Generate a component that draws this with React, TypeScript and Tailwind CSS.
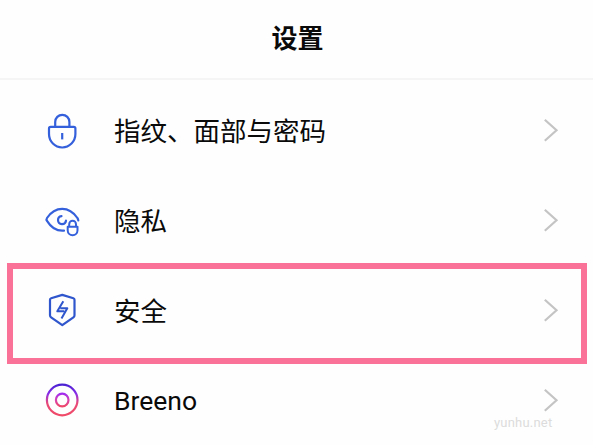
import type { ReactNode } from "react";

function LockIcon() {
  return (
    <svg viewBox="0 0 40 40" className="w-10 h-10" fill="none" stroke="#3560dc" strokeWidth="2.2" strokeLinecap="round">
      <path d="M13.2 16.5v-4.6a7.1 7.1 0 0 1 14.2 0v4.6" />
      <path d="M8.6 16.9h23.2c1 0 1.6.6 1.6 1.6v5.6a13.2 13.4 0 0 1-26.4 0v-5.6c0-1 .6-1.6 1.6-1.6Z" />
      <path d="M20.2 23v6.4" strokeLinecap="butt" />
    </svg>
  );
}

function PrivacyIcon() {
  return (
    <svg viewBox="0 0 40 40" className="w-10 h-10" fill="none" stroke="#3560dc" strokeWidth="2.2" strokeLinecap="round">
      <path d="M36.3 20.5c-.1-1.2-.3-1.7-.9-2.5C31.4 12.2 26.2 8.9 20.2 8.9S8.9 12.2 5 18c-.6.9-.6 1.9 0 2.8 3.9 6.3 9.2 9.900 15.200 9.900h1.800" />
      <path d="M19.5 16.1a4 4 0 1 0 4.5 4.5" />
      <path d="M27.2 26.3v-2.1a3.4 3.400 0 0 1 6.800 0v2.100" strokeWidth="2" />
      <path d="M25.7 26.7h9.8v3.6a4.900 4.900 0 0 1-9.800 0Z" strokeLinejoin="round" strokeWidth="2" />
    </svg>
  );
}

function SecurityIcon() {
  return (
    <svg viewBox="0 0 40 40" className="w-10 h-10" fill="none" stroke="#2f56cc" strokeWidth="2.2" strokeLinejoin="round">
      <path d="M20.3 4.9 31.4 8.3c.7.2 1.1.7 1.1 1.4v15.6c0 .9-.4 1.6-1.1 2.1L20.3 35.2 9.1 27.4c-.7-.5-1.1-1.2-1.1-2.1V9.7c0-.7.4-1.2 1.1-1.4Z" />
      <path d="M21.3 11.3 15.3 21.3h7M18.3 18.2h7L19.5 28.4" strokeWidth="2" />
    </svg>
  );
}

function BreenoIcon() {
  return (
    <svg viewBox="0 0 40 40" className="w-10 h-10" fill="none" strokeWidth="2.2">
      <defs>
        <linearGradient id="outer" x1="0" y1="0" x2="0" y2="1">
          <stop offset="0" stopColor="#4a22d2" />
          <stop offset="0.3" stopColor="#8b2de8" />
          <stop offset="0.6" stopColor="#e84a78" />
          <stop offset="1" stopColor="#f04a68" />
        </linearGradient>
        <linearGradient id="inner" x1="0" y1="0" x2="0" y2="1">
          <stop offset="0" stopColor="#a02cf0" />
          <stop offset="0.5" stopColor="#d843b0" />
          <stop offset="1" stopColor="#ee4668" />
        </linearGradient>
      </defs>
      <circle cx="20.2" cy="20" r="15.3" stroke="url(#outer)" />
      <circle cx="20.2" cy="20" r="6.3" stroke="url(#inner)" />
    </svg>
  );
}

function Row({ icon, label, labelClass = "" }: { icon: ReactNode; label: string; labelClass?: string }) {
  return (
    <li className="flex items-center h-[90px] pl-[42px] pr-[34px]">
      {icon}
      <span className={`ml-8 flex-1 text-[26.5px] leading-10 whitespace-nowrap ${labelClass}`}>{label}</span>
      <svg viewBox="0 0 16 24" className="w-4 h-6" fill="none" stroke="#c4c4c4" strokeWidth="2.2">
        <path d="M1.8 1.8 13.5 12.3 1.8 22.8" />
      </svg>
    </li>
  );
}

export default function App() {
  return (
    <div className="relative w-[593px] h-[445px] overflow-hidden bg-[#fefefe] text-[#0a0a0a] font-['Noto_Sans_CJK_SC',sans-serif]">
      <header className="h-20 pb-1 pl-0.5 flex items-center justify-center border-b-2 border-[#f5f5f5]">
        <h1 className="text-[26px] leading-none font-bold">设置</h1>
      </header>

      <ul className="pt-[5px]">
        <Row icon={<LockIcon />} label="指纹、面部与密码" />
        <Row icon={<PrivacyIcon />} label="隐私" />
        <Row icon={<SecurityIcon />} label="安全" />
        <Row icon={<BreenoIcon />} label="Breeno" labelClass="pt-0.5 font-[Roboto,sans-serif]" />
      </ul>

      <div className="absolute left-[7px] top-[263px] w-[580px] h-[101px] border-6 border-[#fa7298]" />
      <span className="absolute left-[494px] top-[415px] text-[13px] leading-4 tracking-[0.2px] text-[#dcdcdc] font-[Roboto,sans-serif]">
        yunhu.net
      </span>
    </div>
  );
}
